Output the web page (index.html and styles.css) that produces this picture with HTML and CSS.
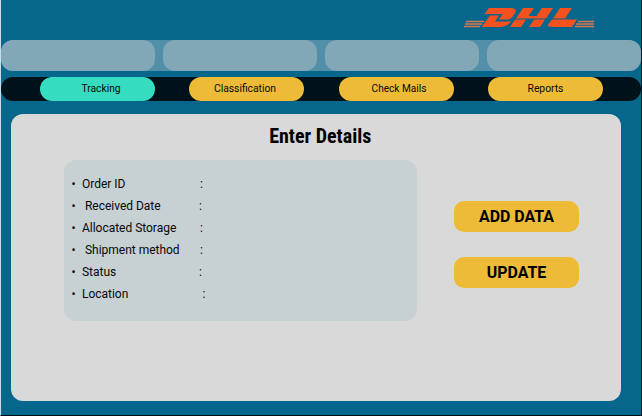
FILE: index.html
```html
<!DOCTYPE html>
<html lang="en">
<head>
<meta charset="utf-8">
<title>DHL Tracking</title>
<link rel="stylesheet" href="styles.css">
</head>
<body>
<div class="app">
  <header class="brand">
    <svg class="logo" viewBox="0 0 132 21" role="img" aria-label="DHL">
      <g fill="#f4511f">
        <path d="M25 1H46Q54 1 51 6L48 10.5Q46 12.500 43 12.500H35L38.500 7H20.500Z"/>
        <path d="M26 8.500H35L31 14.500H47Q43 20 35 20H17.500Z"/>
        <path d="M59 1H70L64.500 9H72.500L78 1H89L82 11.500H52Z"/>
        <path d="M51 12.500H62L57 20H46ZM70 12.500H81L76 20H65Z"/>
        <path d="M96 1H108L101 11.500H89Z"/>
        <path d="M88 12.500H113L108 20H89Q82 20 84.500 17Z"/>
      </g>
      <g class="speed">
        <path d="M2 14.500H20M1 17H18M0 19.500H16M114 14.500H130M112 17H130M111 19.500H130"/>
      </g>
    </svg>
  </header>
  <div class="panels"><span></span><span></span><span></span><span></span></div>
  <nav class="tabs">
    <a class="tab active">Tracking</a>
    <a class="tab">Classification</a>
    <a class="tab">Check Mails</a>
    <a class="tab">Reports</a>
  </nav>
  <main class="card">
    <h1><span>Enter Details</span></h1>
    <div class="content">
      <ul class="details">
        <li>Order ID<b class="c1">:</b></li>
        <li class="indent">Received Date<b class="c2">:</b></li>
        <li>Allocated Storage<b class="c3">:</b></li>
        <li class="indent">Shipment method<b class="c4">:</b></li>
        <li>Status<b class="c5">:</b></li>
        <li>Location<b class="c6">:</b></li>
      </ul>
      <div class="actions">
        <button>ADD DATA</button>
        <button>UPDATE</button>
      </div>
    </div>
  </main>
</div>
</body>
</html>
```
FILE: styles.css
```css
* { box-sizing: border-box; }
body { margin: 0; background: #07668c; font-family: Roboto, sans-serif; color: #05090b; }
.app { width: 642px; height: 416px; overflow: hidden; border-left: 1px solid #c5dfe7; border-right: 1px solid #001b27; border-bottom: 1px solid #001018; background: #07668c; }
.brand { height: 39.500px; padding: 7px 0 0 463px; }
.logo { display: block; width: 132px; height: 21px; }
.speed { stroke: #d47850; stroke-width: 1.3; fill: none; }
.panels { height: 31px; display: grid; grid-template-columns: repeat(4, 153.500px); justify-content: space-between; background: #528fa9; border-radius: 12px; }
.panels span { background: #82a8b8; border-radius: 12px; }
.tabs { height: 24.500px; margin-top: 6px; padding: 0 38px 0 38.500px; display: flex; justify-content: space-between; background: #001219; border-radius: 12px; }
.tab { width: 115px; height: 24.500px; border-radius: 12px; background: #edbb38; font-size: 10.3px; line-height: 24.500px; text-align: center; padding-left: 8px; }
.tab:nth-child(2) { padding: 0 3px 0 0; }
.tab:nth-child(3) { padding-left: 6px; font-size: 10.1px; }
.tab:nth-child(4) { padding-left: 0; }
.tab.active { background: #35dcc0; }
.card { width: 610.500px; height: 286.500px; margin: 13px 0 0 9.500px; background: #d9d9d9; border-radius: 12px; }
h1 { margin: 0; height: 46px; padding-top: 10px; padding-left: 9px; font-size: 20px; line-height: 24px; font-weight: 700; font-stretch: 75%; font-family: "Roboto Condensed", Roboto, sans-serif; text-align: center; color: #000; }
h1 span { display: inline-block; }
.content { display: flex; padding-left: 53px; }
.details { width: 353.500px; height: 161px; margin: 0; padding: 12.500px 0 0 8px; list-style: none; background: #c7d0d3; border-radius: 12px; font-size: 12px; }
li { display: flex; height: 22px; line-height: 22px; white-space: pre; letter-spacing: -0.02px; }
li::before { content: "•"; width: 10.500px; font-size: 12px; }
li.indent::before { width: 13.500px; }
li b { font-weight: 400; margin-left: auto; margin-right: 214px; }
li .c2, li .c5 { margin-right: 215px; }
li .c6 { margin-right: 211.500px; }
.actions { display: flex; flex-direction: column; gap: 25px; padding: 41px 0 0 37px; }
button { width: 125px; height: 31px; padding: 0; border: 0; border-radius: 10px; background: #edbb38; font: 700 15.900px/31px Roboto, sans-serif; color: #000; }
```
